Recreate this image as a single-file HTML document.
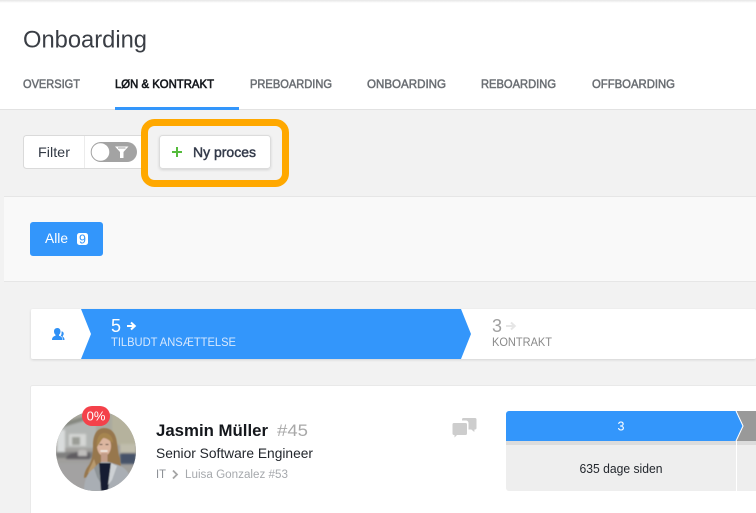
<!DOCTYPE html>
<html lang="da">
<head>
<meta charset="utf-8">
<title>Onboarding</title>
<style>
html,body{margin:0;padding:0;width:756px;height:513px;overflow:hidden;background:#f2f2f2}
svg{display:block}
text{font-family:"Liberation Sans",Arial,sans-serif}
</style>
</head>
<body>
<svg xmlns="http://www.w3.org/2000/svg" width="756" height="513" viewBox="0 0 756 513">
<defs>
<clipPath id="av"><circle cx="96" cy="451" r="40"/></clipPath>
<filter id="b1" x="-10%" y="-10%" width="120%" height="120%"><feGaussianBlur stdDeviation="1"/></filter>
<filter id="b2" x="-10%" y="-10%" width="120%" height="120%"><feGaussianBlur stdDeviation="0.45"/></filter>
<filter id="sh" x="-5%" y="-20%" width="110%" height="150%"><feDropShadow dx="0" dy="1" stdDeviation="1.2" flood-color="#000" flood-opacity="0.13"/></filter>
<linearGradient id="top" x1="0" y1="0" x2="0" y2="1"><stop offset="0" stop-color="#e6e6e6"/><stop offset="1" stop-color="#fff"/></linearGradient>
</defs>

<!-- header -->
<rect x="0" y="0" width="756" height="109" fill="#fff"/>
<rect x="0" y="0" width="756" height="3" fill="url(#top)"/>
<rect x="0" y="109" width="756" height="1" fill="#e2e2e2"/>
<text x="23" y="47.500" font-size="24" fill="#3a3e45" textLength="124" lengthAdjust="spacingAndGlyphs">Onboarding</text>

<g font-size="12" fill="#6a6e73" stroke="#6a6e73" stroke-width="0.5">
<text x="23" y="88.200" textLength="57" lengthAdjust="spacingAndGlyphs">OVERSIGT</text>
<text x="115" y="88.200" textLength="99" lengthAdjust="spacingAndGlyphs" fill="#14171c" stroke="#14171c" stroke-width="0.6">LØN &amp; KONTRAKT</text>
<text x="250" y="88.200" textLength="82" lengthAdjust="spacingAndGlyphs">PREBOARDING</text>
<text x="367" y="88.200" textLength="79" lengthAdjust="spacingAndGlyphs">ONBOARDING</text>
<text x="481" y="88.200" textLength="75" lengthAdjust="spacingAndGlyphs">REBOARDING</text>
<text x="592" y="88.200" textLength="83" lengthAdjust="spacingAndGlyphs">OFFBOARDING</text>
</g>
<rect x="115" y="107" width="124" height="3" fill="#3396fb"/>

<!-- filter -->
<rect x="23.500" y="135.500" width="122" height="33" rx="3" fill="#fff" stroke="#dadada"/>
<rect x="84" y="136" width="1" height="32" fill="#ececec"/>
<text x="38" y="157" font-size="14" fill="#333a45" textLength="32" lengthAdjust="spacingAndGlyphs">Filter</text>
<rect x="91" y="142" width="46" height="20" rx="10" fill="#a3a3a3"/>
<circle cx="100.500" cy="152" r="9.300" fill="#fff" stroke="#a3a3a3"/>
<path d="M115 146.500h13.500l-5 5.500v6h-3.500v-6z" fill="#fff"/>
<path d="M118 148h7.500" stroke="#a3a3a3" stroke-width="1"/>

<!-- new process -->
<rect x="159.500" y="135.500" width="111" height="33" rx="3" fill="#fff" stroke="#dcdcdc" filter="url(#sh)"/>
<path d="M177 147v10M172 152h10" stroke="#55bb3c" stroke-width="2" fill="none"/>
<text x="193" y="157" font-size="14" fill="#333a4a" stroke="#333a4a" stroke-width="0.45" textLength="63" lengthAdjust="spacingAndGlyphs">Ny proces</text>

<!-- highlight -->
<rect x="144.500" y="122.500" width="141" height="61" rx="10" fill="none" stroke="#ffa800" stroke-width="7"/>

<!-- tag panel -->
<rect x="4" y="196" width="752" height="85.500" fill="#f9f9f9"/>
<rect x="4" y="196" width="752" height="1" fill="#e6e6e6"/>
<rect x="4" y="281" width="752" height="1" fill="#e6e6e6"/>
<rect x="30" y="222" width="73" height="34" rx="3" fill="#3396fb"/>
<text x="45" y="243" font-size="14" fill="#fff" textLength="23" lengthAdjust="spacingAndGlyphs">Alle</text>
<rect x="77" y="233" width="11" height="12" rx="2.500" fill="#fff"/>
<text x="82.500" y="243.500" font-size="12.500" fill="#3396fb" text-anchor="middle">9</text>

<!-- steps -->
<rect x="31" y="309" width="725" height="50" rx="2" fill="#fff" filter="url(#sh)"/>
<path d="M81 309H461L471 334 461 359H81L91 334Z" fill="#3396fb"/>
<g fill="#2f90f5">
<path d="M57.500 328c1.900 0 3 1.500 3 3.400 0 1.400-.6 2.700-1.500 3.400v1c2 .6 3.500 1.600 3.500 4.200H52c0-2.600 1.500-3.600 3.500-4.200v-1c-.9-.7-1.500-2-1.500-3.400 0-1.900 1.100-3.400 3.500-3.400z"/>
<path d="M61.800 331.500c1.200 0 1.900 1 1.900 2.300 0 .9-.4 1.700-1 2.200v.7c1 .3 1.800 1.100 1.800 3.300h-1.500c0-2.500-1-3.600-2.300-4.300.6-.8.900-1.700.9-3 0-.4-.1-.8-.2-1.100.1-.1.300-.1.400-.1z"/>
</g>
<text x="111" y="332" font-size="18.500" fill="#fff" textLength="10" lengthAdjust="spacingAndGlyphs">5</text>
<path d="M127 326h7M131 322.500l3.800 3.500-3.800 3.500" fill="none" stroke="#fff" stroke-width="2"/>
<text x="111" y="346" font-size="11.500" fill="#d7e8fd" textLength="125" lengthAdjust="spacingAndGlyphs">TILBUDT ANSÆTTELSE</text>
<text x="492" y="332" font-size="18.500" fill="#a0a0a0" textLength="10" lengthAdjust="spacingAndGlyphs">3</text>
<path d="M506 326h8M511 322.500l3.800 3.500-3.800 3.500" fill="none" stroke="#e6e6e6" stroke-width="2"/>
<text x="492" y="346" font-size="11.500" fill="#8a8a8a" textLength="60" lengthAdjust="spacingAndGlyphs">KONTRAKT</text>

<!-- card -->
<rect x="30.500" y="385.500" width="730" height="140" rx="2" fill="#fff" stroke="#e9e9e9"/>

<!-- avatar -->
<g clip-path="url(#av)">
<rect x="56" y="411" width="80" height="80" fill="#a09f9c"/>
<g filter="url(#b1)">
<rect x="56" y="411" width="80" height="34" fill="#a9a89e"/>
<path d="M60 423 90 415 96 420V448H60Z" fill="#b2b5b3"/>
<path d="M60 423 90 415 90 419 60 428Z" fill="#85877f"/>
<path d="M112 411h24v34h-24z" fill="#b5b29d"/>
<rect x="57" y="430" width="8" height="22" fill="#d9dcdc"/>
<rect x="69" y="434" width="17" height="12" fill="#d4d6d4"/>
<rect x="72" y="437" width="8" height="8" fill="#9a9c96"/>
<path d="M56 452h38v6H56z" fill="#80807f"/>
<path d="M66 459c0-4 5-6 9-6 4-3 10-3 13-1 2 1 3 3 2 7H66z" fill="#5f5c60"/>
<path d="M78 451c2-2 7-2 9 0v5h-9z" fill="#bfbdbb"/>
<rect x="56" y="463" width="32" height="30" fill="#a3a2a2"/>
<path d="M120 454c3-3 12-3 16-1v11h-16z" fill="#465269"/>
<rect x="120" y="444" width="16" height="9" fill="#c0bdac"/>
</g>
<g filter="url(#b2)">
<path d="M84 478c0-5 2-9 5-13 3-5 4-11 4-20 0-10 4-17 11-17 8 0 12 6 13 15 1 6 1 11 3 15l1 10-15 4z" fill="#97774e"/>
<path d="M88 473c1-4 4-9 6-14l2 6-3 9z" fill="#b89a6e"/>
<path d="M84 491c0-8 2-17 9-22l8-7h8l9 3c6 2 10 6 12 12l2 14z" fill="#a9aeb4"/>
<path d="M99 463h12l-3 28h-7z" fill="#161c30"/>
<path d="M111 463l6 3-5 14-4 5z" fill="#cdd1d4"/>
<path d="M99 463l-5 5 3 9 3 5z" fill="#8e9498"/>
<ellipse cx="104" cy="446" rx="7" ry="10" fill="#dcb6a0"/>
<rect x="101" y="453" width="6.500" height="9" fill="#c29c88"/>
<path d="M97 447c-1-9 3-14 7-14 6 0 9 4 9 10-4-3-7-5-9.500-5-2 1-3 4-6.500 9z" fill="#a6854f"/>
<path d="M100.500 451h7" stroke="#f4f0ec" stroke-width="1.500"/>
<path d="M99.500 444.500h3M105.500 444.500h3" stroke="#4c3a30" stroke-width="1"/>
</g>
</g>
<rect x="82" y="406" width="28" height="20" rx="10" fill="#f4414a"/>
<text x="96" y="420.500" font-size="13" fill="#fff" text-anchor="middle">0%</text>

<!-- name -->
<text x="156" y="436" font-size="17" font-weight="700" fill="#14171c" textLength="112" lengthAdjust="spacingAndGlyphs">Jasmin Müller</text>
<text x="277" y="436" font-size="17" fill="#a8a8a8" textLength="31" lengthAdjust="spacingAndGlyphs">#45</text>
<text x="156" y="458" font-size="14" fill="#23272d" textLength="157" lengthAdjust="spacingAndGlyphs">Senior Software Engineer</text>
<text x="156" y="478" font-size="11.500" fill="#8b8f94" textLength="10" lengthAdjust="spacingAndGlyphs">IT</text>
<path d="M173 470.500l4 4-4 4" fill="none" stroke="#a5a5a5" stroke-width="1.800"/>
<text x="185" y="478" font-size="11.500" fill="#a6a9ad" textLength="103" lengthAdjust="spacingAndGlyphs">Luisa Gonzalez #53</text>

<!-- chat -->
<g fill="#cdcdcd">
<path d="M463 418h12a1.500 1.500 0 0 1 1.500 1.500v8.500a1.500 1.500 0 0 1-1.500 1.500h-.5l-.2 2.500-3-2.500h-2.800v-6.500a2.500 2.500 0 0 0-2.500-2.500h-4v-1a1.500 1.500 0 0 1 1-1.500z"/>
<path d="M454 423h11.500a1.500 1.500 0 0 1 1.500 1.500v9a1.500 1.500 0 0 1-1.500 1.500h-8.500l-2.500 2.500v-2.500h-.5a1.500 1.500 0 0 1-1.500-1.500v-9a1.500 1.500 0 0 1 1.500-1.500z"/>
</g>

<!-- stage -->
<path d="M506 441V414a3 3 0 0 1 3-3H736L742.800 426 736 441Z" fill="#3396fb"/>
<path d="M736.500 411H756V441H736.500L743.500 426Z" fill="#999"/>
<path d="M736 411 743 426 736 441" fill="none" stroke="#fff" stroke-width="1"/>
<rect x="506" y="441" width="250" height="4" fill="#dcdcdc"/>
<path d="M506 445H756V491H509a3 3 0 0 1-3-3Z" fill="#eee"/>
<rect x="736" y="441" width="1" height="50" fill="#fff"/>
<text x="621" y="430.500" font-size="12.500" fill="#fff" text-anchor="middle">3</text>
<text x="621" y="473" font-size="12.500" fill="#23272d" text-anchor="middle" textLength="83" lengthAdjust="spacingAndGlyphs">635 dage siden</text>
</svg>
</body>
</html>
